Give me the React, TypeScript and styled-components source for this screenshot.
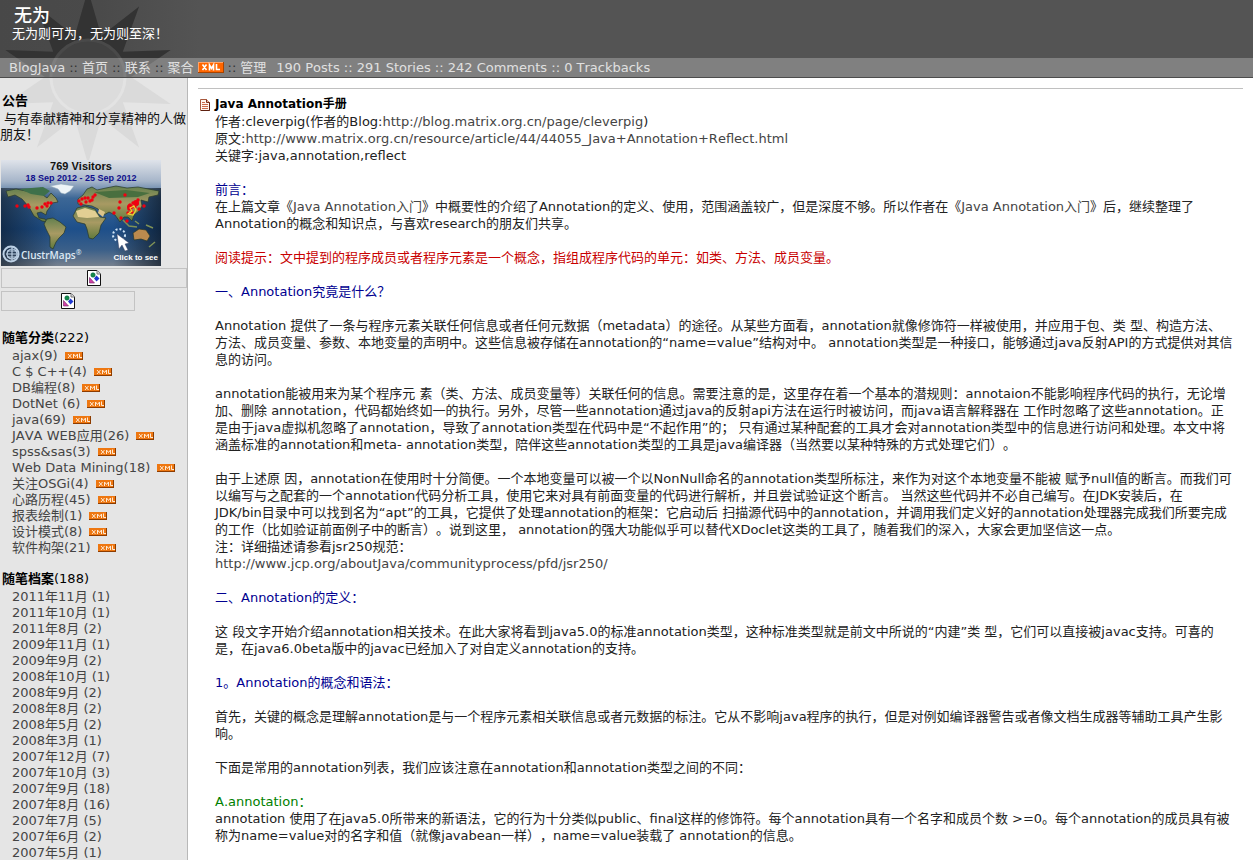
import React from "react";
import styled, { createGlobalStyle } from "styled-components";

const GlobalStyle = createGlobalStyle`
  html {
    scrollbar-width: none;
  }
  body {
    margin: 0;
    background: #fff;
    color: #222;
    font-family: "DejaVu Sans", "Noto Sans CJK SC", sans-serif;
    font-size: 13px;
    line-height: 17px;
    font-kerning: none;
    text-spacing-trim: space-all;
  }
  a {
    color: inherit;
    text-decoration: none;
  }
  a:hover {
    text-decoration: underline;
  }
`;

const Page = styled.div`
  position: relative;
  display: flex;
  flex-direction: column;
  min-height: 100vh;
`;

const SunArt = styled.svg`
  position: absolute;
  top: 0;
  left: 0;
  pointer-events: none;
`;

const Header = styled.header`
  box-sizing: border-box;
  height: 58px;
  padding: 6px 12px 0;
  background: linear-gradient(to right, #484848 0, #4a4a4a 100px, #545454 200px);
  color: #fff;
`;

const BlogTitle = styled.h1`
  position: relative;
  z-index: 1;
  margin: 0;
  padding-left: 2px;
  font-size: 18px;
  line-height: 20px;
  font-weight: 500;
`;

const Subtitle = styled.p`
  position: relative;
  z-index: 1;
  margin: 0;
  line-height: 16px;
`;

const Nav = styled.nav`
  display: flex;
  align-items: center;
  box-sizing: border-box;
  height: 20px;
  padding: 0 9px;
  border-bottom: 1px solid #4c4c4c;
  background: #808080;
  color: #e0e0e0;
  white-space: nowrap;
`;

const NavLinks = styled.div`
  position: relative;
  z-index: 1;
  display: flex;
  align-items: center;
  gap: 4px;
  margin-right: 10px;
`;

const Separator = styled.span`
  color: #333;
`;

const Columns = styled.div`
  display: flex;
  flex: 1;
`;

const Sidebar = styled.aside`
  box-sizing: border-box;
  flex: 0 0 188px;
  padding-top: 14px;
  border-right: 1px solid #b8b8b8;
  background: #e5e5e5;
  line-height: 16px;
`;

const Block = styled.section`
  position: relative;
  z-index: 1;
  margin-bottom: 14px;
`;

const NoticeBlock = styled(Block)`
  margin-bottom: 18px;
`;

const BlockTitle = styled.h2`
  margin: 0;
  padding: 0 2px 2px;
  font-size: 13px;
  line-height: 17px;
  font-weight: bold;
  color: #000;
`;

const Count = styled.span`
  font-weight: normal;
`;

const Notice = styled.p`
  margin: 0 0 17px;
  text-indent: 4px;
  color: #111;
`;

const MapLink = styled.a`
  display: block;
  height: 106px;
  margin: 0 1px 2px;
`;

const MissingImage = styled.a<{ $width: string }>`
  display: flex;
  align-items: center;
  justify-content: center;
  box-sizing: border-box;
  width: ${(p) => p.$width};
  height: 20px;
  margin: 0 0 3px 1px;
  border: 1px solid #c3c3c3;
`;

const List = styled.ul`
  margin: 0;
  padding: 0 0 0 12px;
  list-style: none;
  color: #444;
`;

const Item = styled.li`
  display: flex;
  align-items: center;
  gap: 7px;
  height: 16px;
  white-space: nowrap;
`;

const Main = styled.main`
  flex: 1;
  min-width: 0;
  padding: 10px 10px 16px;
`;

const Rule = styled.hr`
  height: 1px;
  margin: 0 0 7px;
  border: 0;
  background: #c0c0c0;
`;

const PostHead = styled.div`
  display: flex;
  align-items: center;
  gap: 5px;
  padding-left: 2px;
`;

const PostTitle = styled.h2`
  margin: 0;
  font-size: 12px;
  line-height: 17px;
  color: #000;
`;

const PostBody = styled.article`
  padding: 0 9px 0 17px;
`;

const tones = { text: "#222", navy: "#000090", red: "#c80000", green: "#008000" };

const Para = styled.p<{ $tone?: keyof typeof tones; $tight?: boolean }>`
  margin: 0 0 ${(p) => (p.$tight ? "0" : "17px")};
  color: ${(p) => tones[p.$tone ?? "text"]};
`;

const TextLink = styled.a`
  color: #444;
`;

function sunPoints(cx: number, cy: number, outer: number, inner: number) {
  const pts: string[] = [];
  for (let i = 0; i < 20; i++) {
    const r = i % 2 === 0 ? outer : inner;
    const a = (Math.PI / 10) * i - Math.PI / 2;
    pts.push(`${(cx + r * Math.cos(a)).toFixed(1)},${(cy + r * Math.sin(a)).toFixed(1)}`);
  }
  return pts.join(" ");
}

function Sun() {
  const rays = sunPoints(88, 77, 87, 43);
  return (
    <SunArt width="187" height="160" viewBox="0 0 187 160" aria-hidden="true">
      <defs>
        <clipPath id="sunTop"><rect width="187" height="58" /></clipPath>
        <clipPath id="sunNav"><rect y="58" width="187" height="19" /></clipPath>
        <clipPath id="sunLow"><rect y="78" width="187" height="82" /></clipPath>
      </defs>
      <g clipPath="url(#sunTop)">
        <polygon points={rays} fill="#333" />
        <circle cx="88" cy="77" r="37" fill="#414141" stroke="#494949" strokeWidth="3" />
      </g>
      <g clipPath="url(#sunNav)">
        <polygon points={rays} fill="#707070" />
        <circle cx="88" cy="77" r="37" fill="#787878" stroke="#7f7f7f" strokeWidth="3" />
      </g>
      <g clipPath="url(#sunLow)">
        <polygon points={rays} fill="#dadada" />
        <circle cx="88" cy="77" r="37" fill="#dcdcdc" stroke="#e3e3e3" strokeWidth="3" />
      </g>
    </SunArt>
  );
}

function XmlBadge() {
  return (
    <svg width="26" height="11" viewBox="0 0 26 11" role="img" aria-label="XML">
      <rect width="26" height="11" fill="#ff6600" />
      <path d="M0 10.5H26M25.5 0V11" stroke="#a84300" />
      <path d="M0 .5H25M.5 0V10" stroke="#ffa266" />
      <path d="M4.500 2.500L8.500 8M8.500 2.500L4.500 8M11.500 8.500V3L13.500 6.500L15.500 3V8.500M18.500 2V7.500H22" stroke="#fff" strokeWidth="1.600" fill="none" />
    </svg>
  );
}

function XmlMini() {
  return (
    <svg width="18" height="8" viewBox="0 0 18 8" role="img" aria-label="XML">
      <rect width="18" height="8" fill="#ee7711" />
      <path d="M0 7.500H18M17.500 0V8" stroke="#8d3c00" />
      <path d="M3 2L6.500 6M6.500 2L3 6M8.500 6V2L10.500 4.500L12.500 2V6M14.500 1.500V5.500H17" stroke="#ffe9d2" fill="none" />
    </svg>
  );
}

function BrokenIcon() {
  return (
    <svg width="14" height="16" viewBox="0 0 14 16" aria-hidden="true">
      <path d="M.5.5H10L13.500 4V15.500H.5Z" fill="#fff" stroke="#111" />
      <path d="M10 .5V4H13.500" fill="#ddd" stroke="#777" />
      <circle cx="6" cy="5" r="2.200" fill="#178a4a" stroke="#064" strokeWidth=".6" />
      <path d="M2.500 7.500L7.500 13H2.500Z" fill="#d042a8" stroke="#702060" strokeWidth=".6" />
      <path d="M9.500 5.500L12.500 8.500L9.500 11.500L7 8.500Z" fill="#2038d0" />
    </svg>
  );
}

function DocIcon() {
  return (
    <svg width="10" height="12" viewBox="0 0 10 12" aria-hidden="true">
      <path d="M.5.5H6.500L9.500 3.500V11.500H.5Z" fill="#fff6ee" stroke="#a8583c" />
      <path d="M6.500.5V3.500H9.500" fill="#e9b79c" stroke="#7d2f1a" />
      <path d="M2 3.500H5M2 5.500H8M2 7.500H8M2 9.500H8" stroke="#cc6a48" />
      <path d="M9.500 3.500V11.500H1" fill="none" stroke="#5c2010" />
    </svg>
  );
}

const visitorDots = [
  [16, 46], [24, 46], [27, 45], [28, 47], [36, 48], [41, 47], [44, 44], [47, 43], [50, 43], [46, 46],
  [78, 41], [81, 39], [84, 38], [80, 44], [87, 38], [92, 37], [91, 40], [94, 35], [85, 42], [89, 41],
  [119, 42], [118, 48], [124, 35], [137, 40], [113, 53], [120, 58], [126, 61], [143, 46],
  [129, 45], [132, 43], [134, 47], [128, 49], [136, 44], [138, 49], [131, 52], [127, 53],
];

function VisitorMap() {
  return (
    <svg width="160" height="106" viewBox="0 0 160 106" role="img" aria-label="ClustrMaps">
      <defs>
        <linearGradient id="sea" x2="0" y2="1">
          <stop offset="0" stopColor="#dfe3ea" />
          <stop offset=".2" stopColor="#a6b5c9" />
          <stop offset=".36" stopColor="#3c6796" />
          <stop offset=".65" stopColor="#1d4f8a" />
          <stop offset=".85" stopColor="#3c6089" />
          <stop offset="1" stopColor="#76808e" />
        </linearGradient>
        <linearGradient id="edges">
          <stop offset="0" stopColor="#0a1420" stopOpacity=".6" />
          <stop offset=".35" stopColor="#0a1420" stopOpacity="0" />
          <stop offset=".7" stopColor="#0a1420" stopOpacity="0" />
          <stop offset="1" stopColor="#0a1420" stopOpacity=".7" />
        </linearGradient>
        <linearGradient id="land" x2="0" y2="1">
          <stop offset="0" stopColor="#63804e" />
          <stop offset=".5" stopColor="#a89a63" />
          <stop offset="1" stopColor="#607a3c" />
        </linearGradient>
      </defs>
      <rect width="160" height="106" fill="url(#sea)" />
      <rect y="28" width="160" height="78" fill="url(#edges)" />
      <g fill="url(#land)" stroke="#27382a" strokeWidth=".7">
        <path d="M5 31L15 29L25 31L34 30L40 28L45 31L42 35L46 38L50 33L55 38L57 42L51 43L49 47L46 51L45 55L40 52L36 53L38 58L44 59L46 62L41 61L33 56L28 47L21 39L14 35L7 37Z" />
        <path d="M46 59L52 58L59 62L65 67L63 73L58 78L55 82L52 89L49 87L49 77L45 69L43 64Z" />
        <path d="M76 48L84 46L94 49L99 57L105 58L100 65L98 73L92 79L88 78L86 69L84 64L76 62L72 56Z" />
        <path d="M77 39L82 35L86 29L91 27L96 30L105 28L115 26L126 28L137 27L158 31L157 35L148 37L147 42L140 40L141 46L138 51L133 55L131 61L127 57L123 57L119 62L114 55L108 52L103 55L97 49L91 46L84 45L77 44Z" />
        <path d="M132 73L138 69L145 70L149 76L146 81L140 79L133 80Z" fill="#bb8a4e" />
        <path d="M122 60L128 66L136 67M134 61L138 64M145 65L152 68M148 87L154 82" fill="none" stroke="#7f9156" strokeWidth="1.500" />
      </g>
      <path d="M75 51L84 48L94 51L98 57L86 58L77 57Z" fill="#e2cf93" />
      <path d="M98 49L104 52L102 57L97 53Z" fill="#dcc48a" />
      <path d="M19 29L42 27L49 31L43 36L30 34Z" fill="#3e704a" />
      <path d="M93 32L125 30L149 33L137 37L108 38Z" fill="#496f3f" />
      <path d="M49 26L60 24L73 26L69 31L64 34L60 33L57 29Z" fill="#eef4f7" stroke="#8fa8b8" strokeWidth=".5" />
      <g fill="#f00010">
        {visitorDots.map(([x, y]) => <circle key={`${x}-${y}`} cx={x} cy={y} r="1.700" />)}
        <circle cx="135" cy="43" r="3" />
        <circle cx="129" cy="47" r="3" />
      </g>
      <path d="M129 48L133 46L135 50L132 55L127 54L131 51Z" fill="none" stroke="#f4d22c" strokeWidth="1.200" />
      <circle cx="118" cy="75" r="6" fill="none" stroke="#cfe3f5" strokeWidth="2" strokeDasharray="2 2" />
      <path d="M116 74L118 89L121 85L124 91L127 90L124 84L128 83Z" fill="#fff" stroke="#335" strokeWidth=".4" />
      <g fill="none" stroke="#bcd0e4" strokeWidth="1.200">
        <circle cx="10" cy="94" r="7.500" strokeWidth="2" />
        <circle cx="11" cy="94" r="5" />
        <path d="M11 87V101M5 94H17M6 91H16M6 97H16" />
      </g>
      <g fontFamily="Liberation Sans, sans-serif" fontWeight="bold">
        <text x="80" y="10" fontSize="11" textAnchor="middle" fill="#111">769 Visitors</text>
        <text x="80" y="21" fontSize="9" textAnchor="middle" fill="#10108c">18 Sep 2012 - 25 Sep 2012</text>
        <text x="157" y="100" fontSize="8" textAnchor="end" fill="#fff">Click to see</text>
      </g>
      <text x="20" y="99" fontFamily="Open Sans, sans-serif" fontSize="10" fontWeight="600" fill="#dbe8f4">ClustrMaps<tspan fontSize="7" dy="-4">®</tspan></text>
    </svg>
  );
}

const categories = [
  "ajax(9)", "C $ C++(4)", "DB编程(8)", "DotNet (6)", "java(69)", "JAVA WEB应用(26)", "spss&sas(3)",
  "Web Data Mining(18)", "关注OSGi(4)", "心路历程(45)", "报表绘制(1)", "设计模式(8)", "软件构架(21)",
];

const archives = [
  "2011年11月 (1)", "2011年10月 (1)", "2011年8月 (2)", "2009年11月 (1)", "2009年9月 (2)", "2008年10月 (1)",
  "2008年9月 (2)", "2008年8月 (2)", "2008年5月 (2)", "2008年3月 (1)", "2007年12月 (7)", "2007年10月 (3)",
  "2007年9月 (18)", "2007年8月 (16)", "2007年7月 (5)", "2007年6月 (2)", "2007年5月 (1)",
];

export default function App() {
  return (
    <Page lang="zh-CN">
      <GlobalStyle />
      <Sun />
      <Header>
        <BlogTitle><a href="#home">无为</a></BlogTitle>
        <Subtitle>无为则可为，无为则至深！</Subtitle>
      </Header>
      <Nav>
        <NavLinks>
          <a href="#blogjava">BlogJava</a>
          <Separator>::</Separator>
          <a href="#home">首页</a>
          <Separator>::</Separator>
          <a href="#contact">联系</a>
          <Separator>::</Separator>
          <a href="#rss">聚合</a>
          <XmlBadge />
          <Separator>::</Separator>
          <a href="#admin">管理</a>
        </NavLinks>
        <span>190 Posts :: 291 Stories :: 242 Comments :: 0 Trackbacks</span>
      </Nav>
      <Columns>
        <Sidebar>
          <NoticeBlock>
            <BlockTitle>公告</BlockTitle>
            <Notice>与有奉献精神和分享精神的人做朋友！</Notice>
            <MapLink href="#map"><VisitorMap /></MapLink>
            <MissingImage href="#stats" $width="auto" aria-label="stats"><BrokenIcon /></MissingImage>
            <MissingImage href="#counter" $width="134px" aria-label="counter"><BrokenIcon /></MissingImage>
          </NoticeBlock>
          <Block>
            <BlockTitle>随笔分类<Count>(222)</Count></BlockTitle>
            <List>
              {categories.map((name) => (
                <Item key={name}><a href="#category">{name}</a><XmlMini /></Item>
              ))}
            </List>
          </Block>
          <Block>
            <BlockTitle>随笔档案<Count>(188)</Count></BlockTitle>
            <List>
              {archives.map((name) => (
                <Item key={name}><a href="#archive">{name}</a></Item>
              ))}
            </List>
          </Block>
        </Sidebar>
        <Main>
          <Rule />
          <PostHead>
            <DocIcon />
            <PostTitle>Java Annotation手册</PostTitle>
          </PostHead>
          <PostBody>
            <Para>
              作者:cleverpig(作者的Blog:<TextLink href="#author">http://blog.matrix.org.cn/page/cleverpig</TextLink>)<br />
              原文:<TextLink href="#source">http://www.matrix.org.cn/resource/article/44/44055_Java+Annotation+Reflect.html</TextLink><br />
              关键字:java,annotation,reflect
            </Para>
            <Para $tone="navy" $tight>前言：</Para>
            <Para>在上篇文章《<TextLink href="#intro">Java Annotation入门</TextLink>》中概要性的介绍了Annotation的定义、使用，范围涵盖较广，但是深度不够。所以作者在《<TextLink href="#intro">Java Annotation入门</TextLink>》后，继续整理了Annotation的概念和知识点，与喜欢research的朋友们共享。</Para>
            <Para $tone="red">阅读提示：文中提到的程序成员或者程序元素是一个概念，指组成程序代码的单元：如类、方法、成员变量。</Para>
            <Para $tone="navy">一、Annotation究竟是什么？</Para>
            <Para>Annotation 提供了一条与程序元素关联任何信息或者任何元数据（metadata）的途径。从某些方面看，annotation就像修饰符一样被使用，并应用于包、类 型、构造方法、<br />方法、成员变量、参数、本地变量的声明中。这些信息被存储在annotation的“name=value”结构对中。 annotation类型是一种接口，能够通过java反射API的方式提供对其信息的访问。</Para>
            <Para>annotation能被用来为某个程序元 素（类、方法、成员变量等）关联任何的信息。需要注意的是，这里存在着一个基本的潜规则：annotaion不能影响程序代码的执行，无论增加、删除 annotation，代码都始终如一的执行。另外，尽管一些annotation通过java的反射api方法在运行时被访问，而java语言解释器在 工作时忽略了这些annotation。正是由于java虚拟机忽略了annotation，导致了annotation类型在代码中是“不起作用”的； 只有通过某种配套的工具才会对annotation类型中的信息进行访问和处理。本文中将涵盖标准的annotation和meta- annotation类型，陪伴这些annotation类型的工具是java编译器（当然要以某种特殊的方式处理它们）。</Para>
            <Para>
              由于上述原 因，annotation在使用时十分简便。一个本地变量可以被一个以NonNull命名的annotation类型所标注，来作为对这个本地变量不能被 赋予null值的断言。而我们可以编写与之配套的一个annotation代码分析工具，使用它来对具有前面变量的代码进行解析，并且尝试验证这个断言。 当然这些代码并不必自己编写。在JDK安装后，在<br />JDK/bin目录中可以找到名为“apt”的工具，它提供了处理annotation的框架：它启动后 扫描源代码中的annotation，并调用我们定义好的annotation处理器完成我们所要完成的工作（比如验证前面例子中的断言）。说到这里， annotation的强大功能似乎可以替代XDoclet这类的工具了，随着我们的深入，大家会更加坚信这一点。<br />
              注：详细描述请参看jsr250规范：<br />
              <TextLink href="#jsr250">http://www.jcp.org/aboutJava/communityprocess/pfd/jsr250/</TextLink>
            </Para>
            <Para $tone="navy">二、Annotation的定义：</Para>
            <Para>这 段文字开始介绍annotation相关技术。在此大家将看到java5.0的标准annotation类型，这种标准类型就是前文中所说的“内建”类 型，它们可以直接被javac支持。可喜的是，在java6.0beta版中的javac已经加入了对自定义annotation的支持。</Para>
            <Para $tone="navy">1。Annotation的概念和语法：</Para>
            <Para>首先，关键的概念是理解annotation是与一个程序元素相关联信息或者元数据的标注。它从不影响java程序的执行，但是对例如编译器警告或者像文档生成器等辅助工具产生影响。</Para>
            <Para>下面是常用的annotation列表，我们应该注意在annotation和annotation类型之间的不同：</Para>
            <Para $tone="green" $tight>A.annotation：</Para>
            <Para $tight>annotation 使用了在java5.0所带来的新语法，它的行为十分类似public、final这样的修饰符。每个annotation具有一个名字和成员个数 &gt;=0。每个annotation的成员具有被称为name=value对的名字和值（就像javabean一样），name=value装载了 annotation的信息。</Para>
          </PostBody>
        </Main>
      </Columns>
    </Page>
  );
}
